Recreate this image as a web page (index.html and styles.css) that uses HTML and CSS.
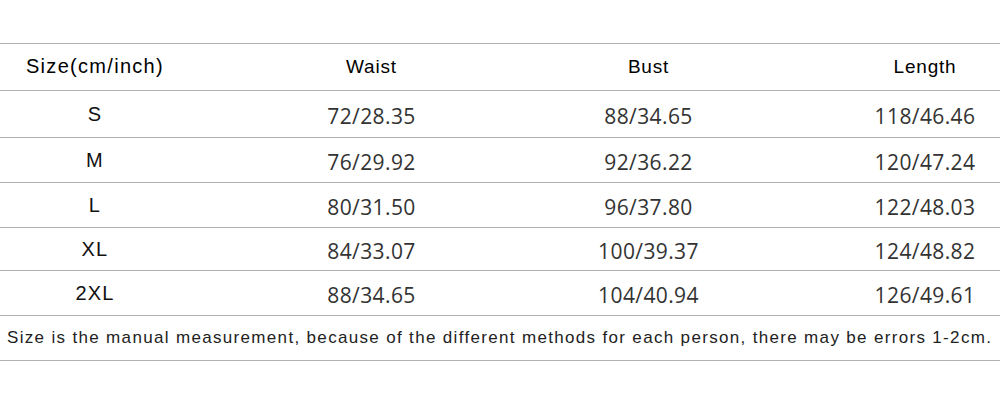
FILE: index.html
```html
<!DOCTYPE html>
<html>
<head>
<meta charset="utf-8">
<link rel="stylesheet" href="styles.css">
</head>
<body>
<div class="chart">
  <div class="row head h47">
    <div class="cell c1 first">Size(cm/inch)</div>
    <div class="cell">Waist</div>
    <div class="cell">Bust</div>
    <div class="cell c4">Length</div>
  </div>
  <div class="row h47">
    <div class="cell c1 size">S</div>
    <div class="cell num">72/28.35</div>
    <div class="cell num">88/34.65</div>
    <div class="cell c4 num">118/46.46</div>
  </div>
  <div class="row h45">
    <div class="cell c1 size">M</div>
    <div class="cell num">76/29.92</div>
    <div class="cell num">92/36.22</div>
    <div class="cell c4 num">120/47.24</div>
  </div>
  <div class="row h45">
    <div class="cell c1 size">L</div>
    <div class="cell num">80/31.50</div>
    <div class="cell num">96/37.80</div>
    <div class="cell c4 num">122/48.03</div>
  </div>
  <div class="row h43">
    <div class="cell c1 size">XL</div>
    <div class="cell num">84/33.07</div>
    <div class="cell num">100/39.37</div>
    <div class="cell c4 num">124/48.82</div>
  </div>
  <div class="row h45">
    <div class="cell c1 size">2XL</div>
    <div class="cell num">88/34.65</div>
    <div class="cell num">104/40.94</div>
    <div class="cell c4 num">126/49.61</div>
  </div>
  <div class="note">Size is the manual measurement, because of the different methods for each person, there may be errors 1-2cm.</div>
</div>
</body>
</html>
```
FILE: styles.css
```css
html, body {
  margin: 0;
  padding: 0;
  background: #fff;
}
body {
  width: 1000px;
  height: 400px;
  overflow: hidden;
}
.chart {
  padding-top: 43px;
}
.row {
  display: grid;
  grid-template-columns: 233px 277px 277px 1fr;
  border-top: 1px solid #b0b0b0;
  box-sizing: border-box;
}
.h47 { height: 47px; }
.h45 { height: 45px; }
.h43 { height: 43px; }
.cell {
  display: flex;
  align-items: center;
  justify-content: center;
  font-family: "Liberation Sans", Arial, sans-serif;
  font-size: 19px;
  color: #111;
}
.c1 { padding-right: 43px; }
.c4 { padding-left: 63px; }
.head .cell {
  letter-spacing: 0.8px;
  color: #000;
  padding-bottom: 1px;
}
.head .first {
  font-size: 20px;
  letter-spacing: 1.3px;
}
.size {
  font-size: 20px;
  letter-spacing: 1.2px;
}
.num {
  font-family: "Open Sans", sans-serif;
  font-size: 21px;
  color: #333;
  letter-spacing: 0.4px;
  padding-top: 3px;
}
.note {
  height: 46px;
  border-top: 1px solid #b0b0b0;
  border-bottom: 1px solid #b0b0b0;
  box-sizing: border-box;
  display: flex;
  align-items: center;
  padding-left: 7px;
  font-family: "Liberation Sans", Arial, sans-serif;
  font-size: 17px;
  letter-spacing: 1.33px;
  color: #222;
  white-space: nowrap;
}
```
